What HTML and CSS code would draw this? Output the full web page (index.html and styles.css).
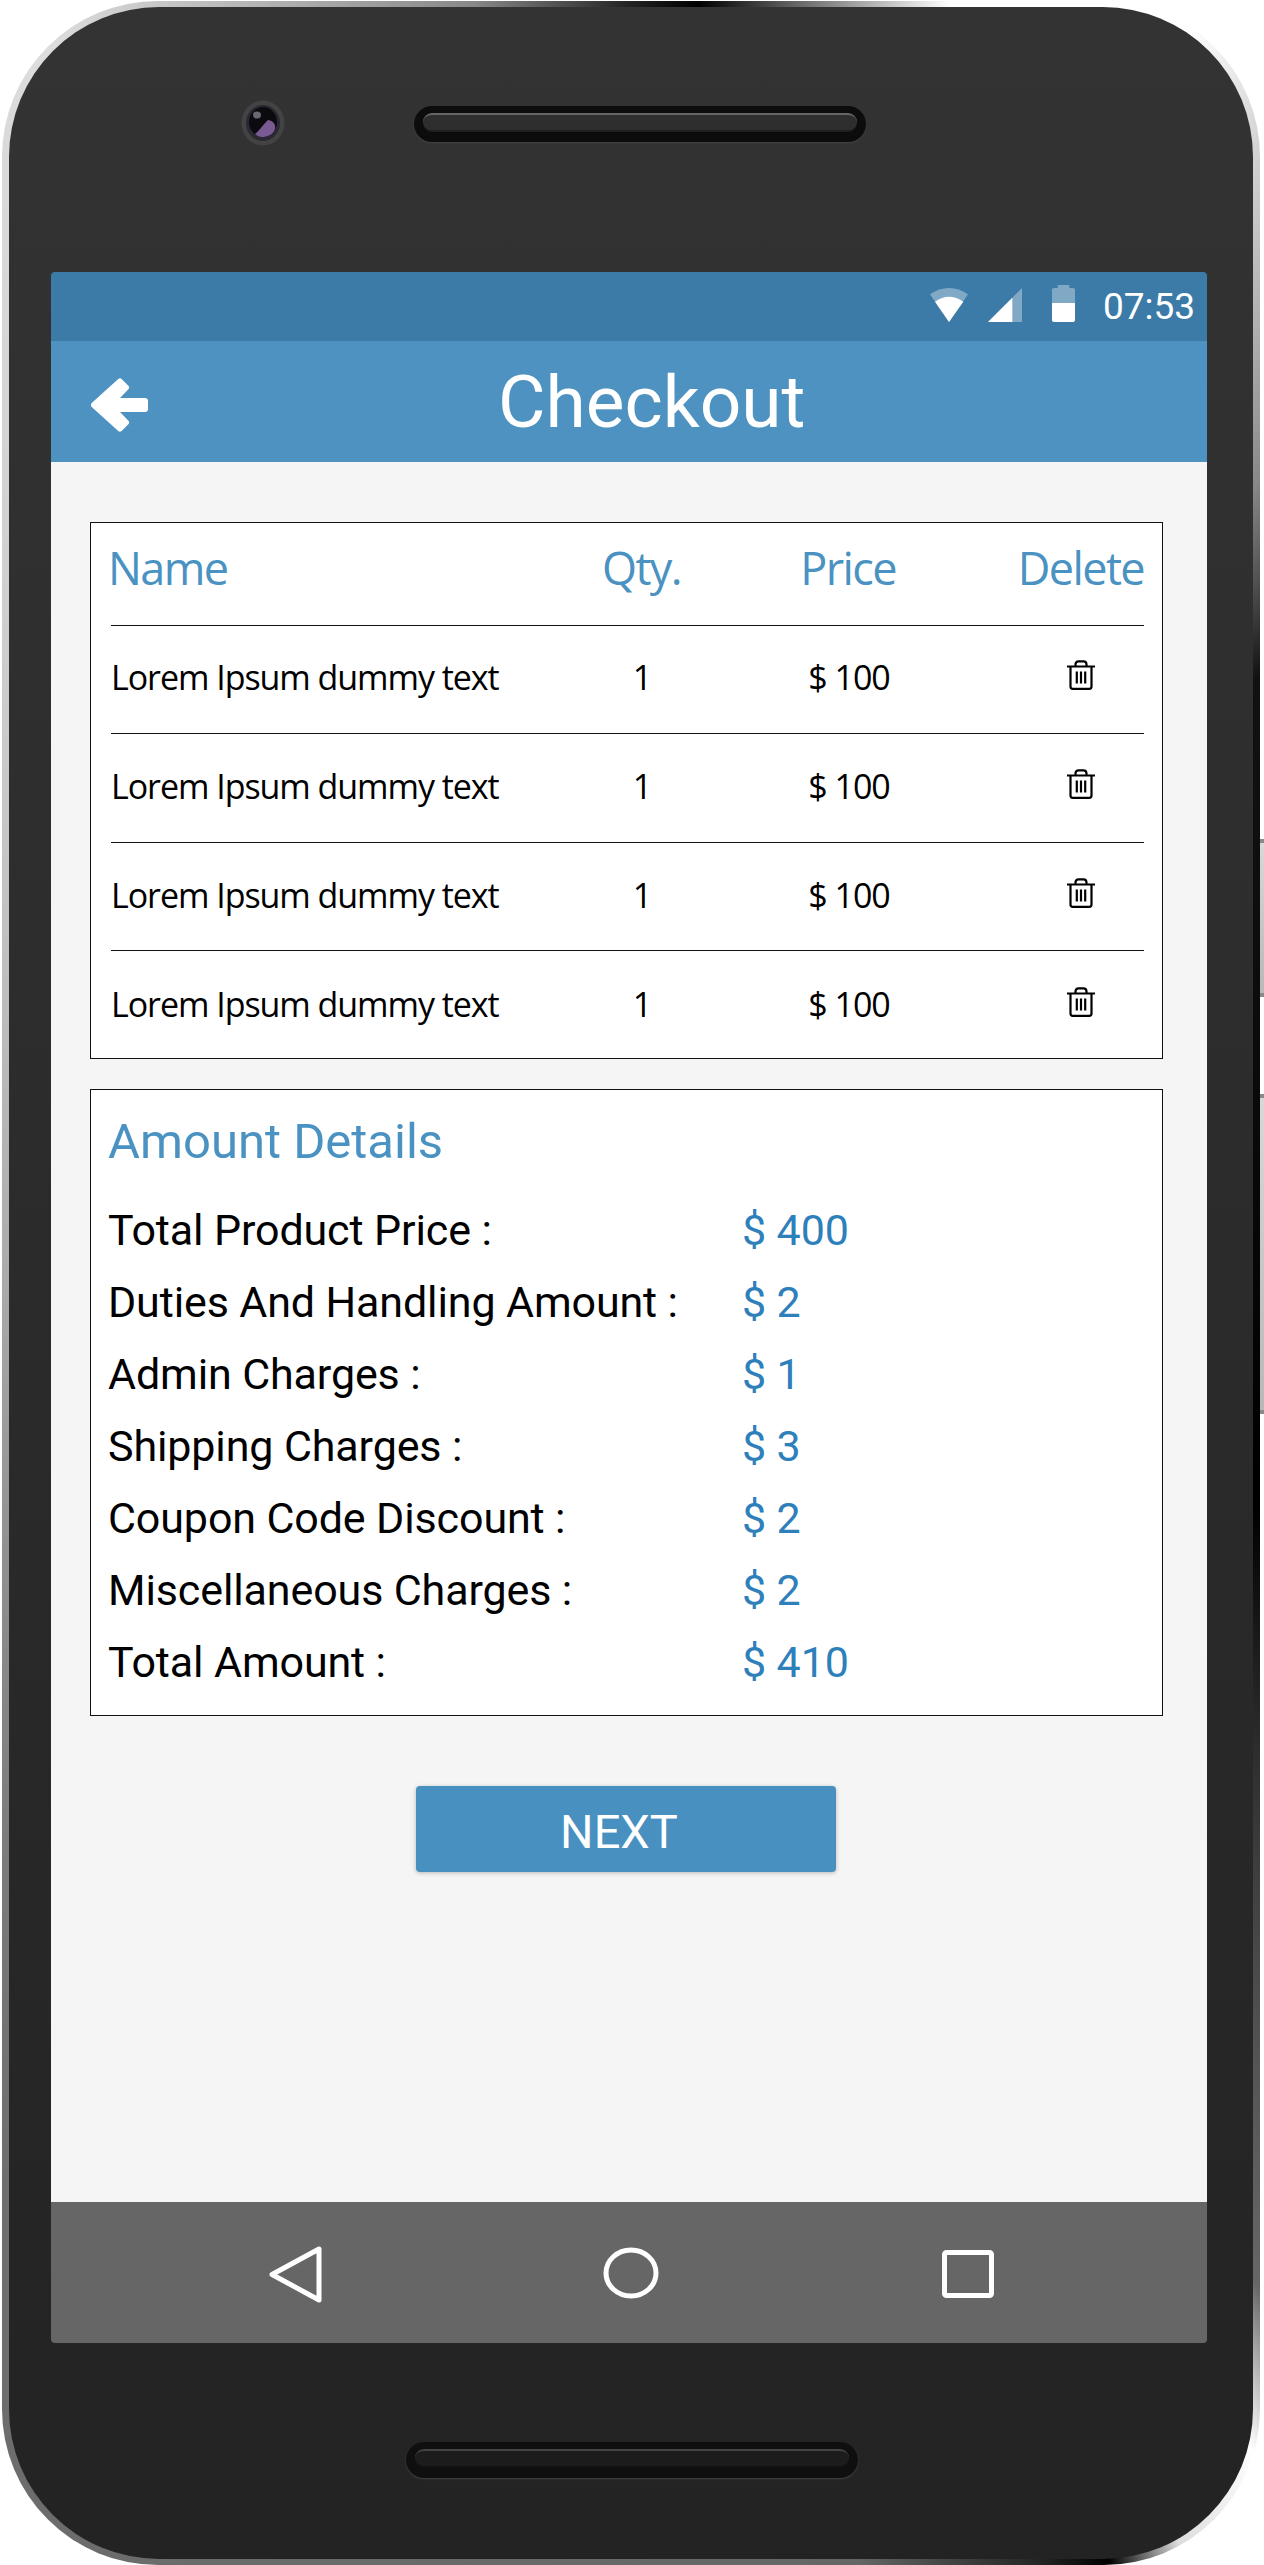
FILE: index.html
```html
<!DOCTYPE html>
<html lang="en">
<head>
    <meta charset="utf-8" />
    <title>Checkout</title>
    <link rel="stylesheet" href="styles.css">
</head>
<body>
<svg class="defs" width="0" height="0">
    <symbol id="trash" viewBox="0 0 28 30">
        <path d="M0 6.5H28M8.5 6V4.5C8.5 2.5 9.5 1.3 11.5 1.3H16.500C18.500 1.300 19.500 2.500 19.500 4.500V6M3.500 6.500V26.500C3.500 28 4.300 28.800 5.800 28.800H22.200C23.700 28.800 24.500 28 24.500 26.500V6.500M9.800 11.500V23.500M14 11.500V23.500M18.200 11.500V23.500" fill="none" stroke="#000" stroke-width="2.200" />
    </symbol>
</svg>
<div class="phone">
    <div class="side-key side-key-power"></div>
    <div class="side-key side-key-volume"></div>
    <div class="phone-body">
        <div class="bezel-top">
            <svg class="camera" viewBox="0 0 44 46" width="44" height="46">
                <ellipse cx="22" cy="23" rx="21.500" ry="22.500" fill="#434343" />
                <ellipse cx="22" cy="23" rx="17" ry="18" fill="#2a2833" />
                <ellipse cx="22" cy="22" rx="14" ry="15" fill="#0b0a0e" />
                <path d="M14 34C18 31 21 26 27 20C33 21 35 25 34 29C32 35 26 37 21 37C18 37 16 36 14 34Z" fill="#7a5a92" />
                <ellipse cx="16" cy="15" rx="4" ry="3.500" fill="#6b6772" />
            </svg>
            <div class="speaker"><div class="speaker-grill"></div></div>
        </div>
        <div class="screen">
            <div class="status-bar">
                <svg class="icon-wifi" viewBox="0 0 38 34" width="38" height="34">
                    <path d="M0 6.300Q19 -6.300 38 6.300L19 34Z" fill="#fff" fill-opacity=".35" />
                    <path d="M5 13.700Q19 3.700 33.300 13.700L19 34Z" fill="#fff" />
                </svg>
                <svg class="icon-signal" viewBox="0 0 34 34" width="34" height="34">
                    <path d="M34 0V34H0Z" fill="#fff" fill-opacity=".35" />
                    <path d="M24.300 9.700V34H0Z" fill="#fff" />
                </svg>
                <svg class="icon-battery" viewBox="0 0 23 37" width="23" height="37">
                    <path d="M5.700 0H17.300V3H21C22.200 3 23 3.800 23 5V18H0V5C0 3.800 .8 3 2 3H5.700Z" fill="#fff" fill-opacity=".35" />
                    <path d="M0 18H23V35C23 36.200 22.200 37 21 37H2C.8 37 0 36.200 0 35Z" fill="#fff" />
                </svg>
                <span class="clock">07:53</span>
            </div>
            <div class="app-header">
                <svg class="icon-back" viewBox="0 0 57 54" width="57" height="54">
                    <polygon points="3,27 29,3.500 35,9.500 22,23 54,23 54,31 22,31 35,44.500 29,50.500" fill="#fff" stroke="#fff" stroke-width="6" stroke-linejoin="round" />
                </svg>
                <h1>Checkout</h1>
            </div>
            <div class="content">
                <div class="card cart">
                    <div class="cart-row cart-head">
                        <div>Name</div>
                        <div class="center">Qty.</div>
                        <div class="center">Price</div>
                        <div class="right">Delete</div>
                    </div>
                    <div class="cart-row">
                        <div>Lorem Ipsum dummy text</div>
                        <div class="center">1</div>
                        <div class="center">$ 100</div>
                        <div class="right"><svg class="icon-trash"><use href="#trash" /></svg></div>
                    </div>
                    <div class="cart-row">
                        <div>Lorem Ipsum dummy text</div>
                        <div class="center">1</div>
                        <div class="center">$ 100</div>
                        <div class="right"><svg class="icon-trash"><use href="#trash" /></svg></div>
                    </div>
                    <div class="cart-row">
                        <div>Lorem Ipsum dummy text</div>
                        <div class="center">1</div>
                        <div class="center">$ 100</div>
                        <div class="right"><svg class="icon-trash"><use href="#trash" /></svg></div>
                    </div>
                    <div class="cart-row">
                        <div>Lorem Ipsum dummy text</div>
                        <div class="center">1</div>
                        <div class="center">$ 100</div>
                        <div class="right"><svg class="icon-trash"><use href="#trash" /></svg></div>
                    </div>
                </div>
                <div class="card amounts">
                    <h2>Amount Details</h2>
                    <div class="amount-row"><span class="amount-label">Total Product Price :</span><span class="amount-value">$ 400</span></div>
                    <div class="amount-row"><span class="amount-label">Duties And Handling Amount :</span><span class="amount-value">$ 2</span></div>
                    <div class="amount-row"><span class="amount-label">Admin Charges :</span><span class="amount-value">$ 1</span></div>
                    <div class="amount-row"><span class="amount-label">Shipping Charges :</span><span class="amount-value">$ 3</span></div>
                    <div class="amount-row"><span class="amount-label">Coupon Code Discount :</span><span class="amount-value">$ 2</span></div>
                    <div class="amount-row"><span class="amount-label">Miscellaneous Charges :</span><span class="amount-value">$ 2</span></div>
                    <div class="amount-row"><span class="amount-label">Total Amount :</span><span class="amount-value">$ 410</span></div>
                </div>
                <button class="next-button">NEXT</button>
            </div>
            <div class="nav-bar">
                <svg class="nav-back" viewBox="0 0 53 57" width="53" height="57">
                    <path d="M50 3V54L3 28.500Z" fill="none" stroke="#fff" stroke-width="5" stroke-linejoin="round" />
                </svg>
                <svg class="nav-home" viewBox="0 0 56 52" width="56" height="52">
                    <ellipse cx="28" cy="26" rx="25" ry="23" fill="none" stroke="#fff" stroke-width="5" />
                </svg>
                <svg class="nav-recent" viewBox="0 0 52 48" width="52" height="48">
                    <rect x="2.500" y="2.500" width="47" height="43" rx="2" fill="none" stroke="#fff" stroke-width="5" />
                </svg>
            </div>
        </div>
        <div class="bezel-bottom">
            <div class="speaker speaker-bottom"><div class="speaker-grill"></div></div>
        </div>
    </div>
</div>
</body>
</html>
```

FILE: styles.css
```css
html, body {
    margin: 0;
    padding: 0;
    background-color: #fff;
}

.defs {
    position: absolute;
}

.phone {
    position: relative;
    box-sizing: border-box;
    width: 1258px;
    height: 2564px;
    margin: 1px 0 0 2px;
    padding: 6px 7px 6px 7px;
    border-radius: 156px;
    background: conic-gradient(#222 0deg, #000 3deg, #fff 14deg, #fff 24deg, #c0c0c0 31deg, #888 38deg, #111 46deg, #000 110deg, #666 148deg, #fff 152deg, #ddd 156.500deg, #000 159.500deg, #222 162deg, #666 170deg, #6e6e6e 215deg, #aaa 270deg, #ddd 335deg, #888 353deg, #222 360deg);
}

.side-key {
    position: absolute;
    right: -6px;
    width: 6px;
    background: linear-gradient(#d8d8d8, #b8b8b8);
    border-top: 4px solid #8a8a8a;
    border-bottom: 4px solid #8a8a8a;
}

.side-key-power {
    top: 838px;
    height: 150px;
}

.side-key-volume {
    top: 1093px;
    height: 312px;
}

.phone-body {
    box-sizing: border-box;
    height: 100%;
    border-radius: 150px;
    background: linear-gradient(#333 0%, #2b2b2b 50%, #232323 100%);
    display: flex;
    flex-direction: column;
}

.bezel-top {
    position: relative;
    height: 265px;
    flex: none;
}

.camera {
    position: absolute;
    left: 232px;
    top: 93px;
}

.speaker {
    position: absolute;
    left: 405px;
    top: 99px;
    box-sizing: border-box;
    width: 452px;
    height: 36px;
    padding: 7px 9px 0;
    border-radius: 18px;
    background-color: #0c0c0c;
    box-shadow: 0 1px 2px #444;
}

.speaker-bottom {
    left: 397px;
    top: 99px;
    background-color: #0f0f0f;
}

.speaker-grill {
    height: 19px;
    box-sizing: border-box;
    border-top: 2px solid #666;
    border-bottom: 2px solid #1f1f1f;
    border-radius: 9px;
    background-color: #2e2e2e;
}

.speaker-bottom .speaker-grill {
    border-top-color: #444;
    border-bottom-color: #111;
    background-color: #1c1c1c;
}

.screen {
    width: 1156px;
    margin-left: 42px;
    height: 2071px;
    flex: none;
    display: flex;
    flex-direction: column;
    border-radius: 4px;
    overflow: hidden;
    font-family: Roboto, sans-serif;
}

.status-bar {
    height: 69px;
    flex: none;
    background-color: #3c7ba8;
    position: relative;
}

.icon-wifi, .icon-signal, .icon-battery, .clock {
    position: absolute;
}

.icon-wifi {
    left: 879px;
    top: 16px;
}

.icon-signal {
    left: 937px;
    top: 16px;
}

.icon-battery {
    left: 1001px;
    top: 13px;
}

.clock {
    left: 1052px;
    top: 14px;
    color: #fff;
    font-size: 37px;
    line-height: 42px;
}

.app-header {
    height: 121px;
    flex: none;
    background-color: #4d92c1;
    display: flex;
    align-items: center;
    position: relative;
}

.icon-back {
    position: absolute;
    left: 40px;
    top: 37px;
}

h1 {
    margin: 0 0 0 447px;
    color: #fff;
    font-size: 73px;
    font-weight: 400;
    line-height: 86px;
}

.content {
    flex: 1;
    background-color: #f5f5f5;
    padding: 60px 44px 0 39px;
}

.card {
    background-color: #fff;
    border: 1px solid #111;
}

.cart {
    height: 537px;
    box-sizing: border-box;
    padding: 0 18px 0 20px;
    font-family: "Open Sans", sans-serif;
    font-size: 34px;
    color: #000;
}

.cart-row {
    display: grid;
    grid-template-columns: 459px 144px 270px 160px;
    align-items: center;
    box-sizing: border-box;
    height: 108.330px;
    padding-bottom: 3px;
    border-top: 1px solid #111;
    letter-spacing: -1.050px;
}

.cart-row:nth-child(2) {
    padding-bottom: 5px;
}

.cart-row:nth-child(3) {
    padding-bottom: 4px;
}

.cart-row:nth-child(4) {
    padding-bottom: 2px;
}

.cart-row:nth-child(5) {
    padding-bottom: 1px;
}

.cart-head {
    height: 102px;
    padding-bottom: 13px;
    border-top: none;
    font-size: 45px;
    color: #4a92c2;
    letter-spacing: -1.600px;
    margin-left: -3px;
    grid-template-columns: 462px 143px 270px 161px;
}

.center {
    text-align: center;
}

.right {
    text-align: right;
}

.icon-trash {
    width: 28px;
    height: 30px;
    margin-right: 49px;
    margin-top: 2px;
    display: inline-block;
}

.amounts {
    margin-top: 30px;
    padding: 22px 18px 19px 17px;
}

h2 {
    margin: 0 0 20px;
    color: #4a92c2;
    font-size: 49px;
    font-weight: 400;
    line-height: 60px;
}

.amount-row {
    position: relative;
    top: 2px;
    height: 72px;
    line-height: 72px;
    font-size: 43px;
    letter-spacing: -.12px;
    color: #000;
    display: flex;
}

.amount-label {
    width: 634px;
    flex: none;
}

.amount-value {
    color: #2e80bb;
}

.next-button {
    display: block;
    width: 420px;
    height: 86px;
    margin: 70px 0 0 326px;
    padding: 5px 14px 0 0;
    border: none;
    border-radius: 4px;
    background-color: #4890bf;
    box-shadow: 0 1px 4px rgba(0, 0, 0, .25);
    color: #fff;
    font-family: Roboto, sans-serif;
    font-size: 47px;
}

.nav-bar {
    height: 141px;
    flex: none;
    background-color: #666;
    position: relative;
}

.nav-back {
    position: absolute;
    left: 218px;
    top: 44px;
}

.nav-home {
    position: absolute;
    left: 552px;
    top: 45px;
}

.nav-recent {
    position: absolute;
    left: 891px;
    top: 48px;
}

.bezel-bottom {
    position: relative;
    flex: 1;
}
```
